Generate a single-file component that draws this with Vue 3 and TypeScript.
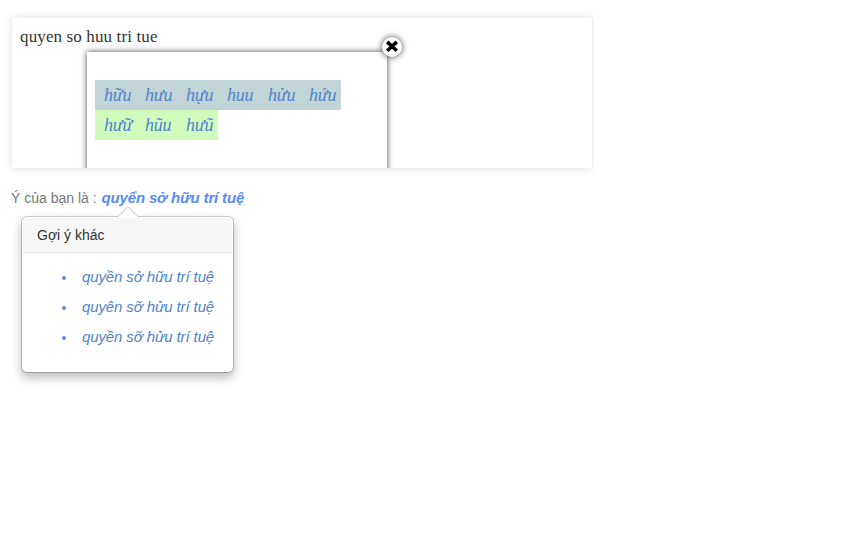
<script setup lang="ts">
interface WordRow {
  tone: string
  words: string[]
}

const typed = 'quyen so huu tri tue'
const best = 'quyển sở hữu trí tuệ'
const rows: WordRow[] = [
  { tone: 'blue', words: ['hữu', 'hưu', 'hựu', 'huu', 'hửu', 'hứu'] },
  { tone: 'green', words: ['hưữ', 'hũu', 'hưũ'] },
]
const suggestions: string[] = ['quyền sở hữu trí tuệ', 'quyên sỡ hửu trí tuệ', 'quyền sỡ hửu trí tuệ']
</script>

<template>
  <main class="page">
    <div class="clip">
      <section class="editor">
        <p class="typed">{{ typed }}</p>
        <div class="viewport">
          <div class="words">
            <div v-for="row in rows" :key="row.tone" class="row" :class="row.tone">
              <a v-for="word in row.words" :key="word" class="word">{{ word }}</a>
            </div>
          </div>
        </div>
        <button class="close" aria-label="Close">
          <svg width="14" height="14" viewBox="0 0 14 14">
            <path d="M2.2 1.9 L11.8 10.7 M11.8 1.9 L2.2 10.7" stroke="#000" stroke-width="3.5" />
          </svg>
        </button>
      </section>
    </div>
    <p class="result">Ý của bạn là : <a class="best">{{ best }}</a></p>
    <aside class="popover">
      <svg class="arrow" width="22" height="12" viewBox="0 0 22 12">
        <path d="M0 11.5 L11 0.8 L22 11.5" fill="#fff" stroke="#c4c4c4" />
      </svg>
      <h3 class="title">Gợi ý khác</h3>
      <ul class="list">
        <li v-for="item in suggestions" :key="item"><a>{{ item }}</a></li>
      </ul>
    </aside>
  </main>
</template>

<style>
body {
  background: #fff;
}
</style>

<style scoped>
.page {
  min-height: 540px;
  font: 14px/20px "Liberation Sans", Arial, sans-serif;
  color: #777;
}
.clip {
  width: 594px;
  height: 188px;
  box-sizing: border-box;
  padding: 18px 0 0 12px;
  overflow: hidden;
}
.editor {
  position: relative;
  width: 580px;
  height: 150px;
  background: #fff;
  box-shadow: 0 0 8px rgba(0, 0, 0, 0.13);
}
.typed {
  margin: 0;
  padding: 8px 8px 0;
  font: 17px/22px "Liberation Serif", "Times New Roman", serif;
  letter-spacing: 0.13px;
  color: #333;
}
.viewport {
  position: absolute;
  left: 65px;
  top: 24px;
  width: 320px;
  height: 126px;
  overflow: hidden;
}
.words {
  box-sizing: border-box;
  width: 300px;
  height: 150px;
  margin: 10px 0 0 10px;
  padding: 28px 8px 0;
  background: #fff;
  box-shadow: 0 0 6px #444;
}
.row {
  display: flex;
  width: max-content;
  height: 30px;
}
.blue {
  background: #c1d5d7;
}
.green {
  background: #d1fbbd;
}
.word {
  box-sizing: border-box;
  width: 41px;
  padding-left: 9px;
  font: italic 18px/30px "Liberation Serif", "Times New Roman", serif;
  letter-spacing: -0.2px;
  color: #4f84cb;
  white-space: nowrap;
}
.close {
  position: absolute;
  left: 370px;
  top: 19px;
  display: flex;
  align-items: center;
  justify-content: center;
  width: 20px;
  height: 20px;
  padding: 0;
  border: 0;
  border-radius: 50%;
  background: #fff;
  box-shadow: 0 0 6px #444;
}
.result {
  margin: 0;
  padding-left: 11px;
  white-space: nowrap;
}
.best {
  margin-left: 1px;
  font-size: 15px;
  font-weight: bold;
  font-style: italic;
  letter-spacing: -0.16px;
  color: #578cf1;
}
.popover {
  position: relative;
  box-sizing: border-box;
  width: 213px;
  height: 157px;
  margin: 8px 0 0 21px;
  padding: 1px;
  border: 1px solid rgba(0, 0, 0, 0.2);
  border-radius: 6px;
  background: #fff;
  background-clip: padding-box;
  box-shadow: 0 5px 10px rgba(0, 0, 0, 0.25);
}
.arrow {
  position: absolute;
  left: 95px;
  top: -11px;
}
.title {
  margin: 0;
  padding: 8px 14px 7px;
  border-bottom: 1px solid #ebebeb;
  border-radius: 5px 5px 0 0;
  background: #f7f7f7;
  font-size: 14px;
  font-weight: normal;
  line-height: 19px;
  color: #333;
}
.list {
  margin: 0;
  padding: 9px 0 0 39px;
  list-style: none;
  font-size: 15px;
  line-height: 30px;
  font-style: italic;
  letter-spacing: -0.12px;
  white-space: nowrap;
}
.list li {
  display: flex;
  align-items: center;
}
.list li::before {
  content: "";
  width: 4px;
  height: 4px;
  margin: 2px 16px 0 0;
  border-radius: 50%;
  background: #578cf1;
}
.list a {
  color: #4f84cb;
}
</style>
